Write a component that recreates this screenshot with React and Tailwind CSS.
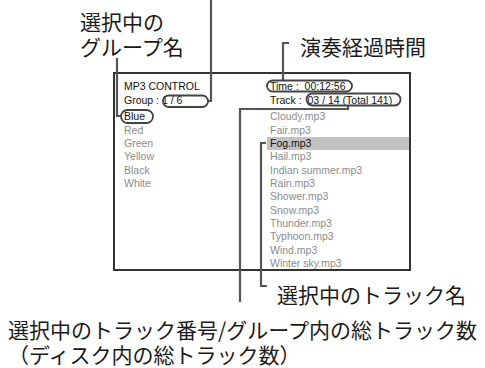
const groups = ['Blue', 'Red', 'Green', 'Yellow', 'Black', 'White'];
const tracks = [
  'Cloudy.mp3',
  'Fair.mp3',
  'Fog.mp3',
  'Hail.mp3',
  'Indian summer.mp3',
  'Rain.mp3',
  'Shower.mp3',
  'Snow.mp3',
  'Thunder.mp3',
  'Typhoon.mp3',
  'Wind.mp3',
  'Winter sky.mp3',
];

const jp = { fontFamily: '"Noto Sans CJK JP", "Noto Sans", sans-serif' };

export default function App() {
  return (
    <div className="relative w-[485px] h-[368px] bg-white overflow-hidden">
      {/* Screen panel */}
      <div
        className="ml-[113px] mt-[72px] w-[298px] h-[199px] border-2 border-[#333] pl-[9px] pt-[6px] text-[10.5px] leading-[13.5px] grid grid-cols-[143px_1fr]"
        style={{ fontFamily: '"Liberation Sans", Arial, sans-serif' }}
      >
        {/* Left column */}
        <div>
          <div className="text-[#111]">MP3 CONTROL</div>
          <div className="text-[#111] whitespace-pre">Group : 1 / 6</div>
          <div className="mt-[3.3px] leading-[13.35px]">
            {groups.map((g, i) => (
              <div key={g} className={i === 0 ? 'text-[#111]' : 'text-[#8c8c8c]'}>{g}</div>
            ))}
          </div>
        </div>

        {/* Right column */}
        <div>
          <div className="pl-[3px] text-[#111] whitespace-pre">Time :  00:12:56</div>
          <div className="pl-[3px] text-[#111] whitespace-pre">Track :  03 / 14 (Total 141)</div>
          <div className="mt-[3.3px] leading-[13.35px]">
            {tracks.map(t => (
              <div
                key={t}
                className={t === 'Fog.mp3' ? 'pl-[3px] bg-[#c2c2c2] text-[#111]' : 'pl-[3px] text-[#8c8c8c]'}
              >
                {t}
              </div>
            ))}
          </div>
        </div>
      </div>

      {/* Callout lines and ovals */}
      <svg className="absolute inset-0 pointer-events-none" width="485" height="368" viewBox="0 0 485 368" fill="none">
        <g stroke="#555" strokeWidth="2.2">
          <path d="M117 58 V116 H121" />
          <path d="M208 101 H211 V0" />
          <path d="M289 43 H283 V80.5" />
          <path d="M348 105.5 V109 H240 V302" />
          <path d="M266 143 H261 V286 H267" />
        </g>
        <g stroke="#444" strokeWidth="1.8">
          <rect x="121" y="110" width="32" height="13" rx="6.5" />
          <rect x="163" y="95.5" width="45" height="11.5" rx="5.75" />
          <rect x="267" y="80.5" width="85" height="11" rx="5.5" />
          <rect x="306.5" y="93.5" width="94" height="12" rx="6" />
        </g>
      </svg>

      {/* Callout labels */}
      <div className="absolute left-[80px] top-[9px] text-[21px] leading-[25px] text-[#1a1a1a]" style={jp}>
        <div>選択中の</div>
        <div>グループ名</div>
      </div>
      <div className="absolute left-[300px] top-[34px] text-[21px] leading-[25px] text-[#1a1a1a]" style={jp}>
        演奏経過時間
      </div>
      <div className="absolute left-[277px] top-[282px] text-[21px] leading-[25px] text-[#1a1a1a]" style={jp}>
        選択中のトラック名
      </div>
      <div className="absolute left-[8px] top-[317px] text-[21px] leading-[25px] text-[#1a1a1a] whitespace-nowrap" style={jp}>
        <div>選択中のトラック番号/グループ内の総トラック数</div>
        <div>（ディスク内の総トラック数）</div>
      </div>
    </div>
  );
}
